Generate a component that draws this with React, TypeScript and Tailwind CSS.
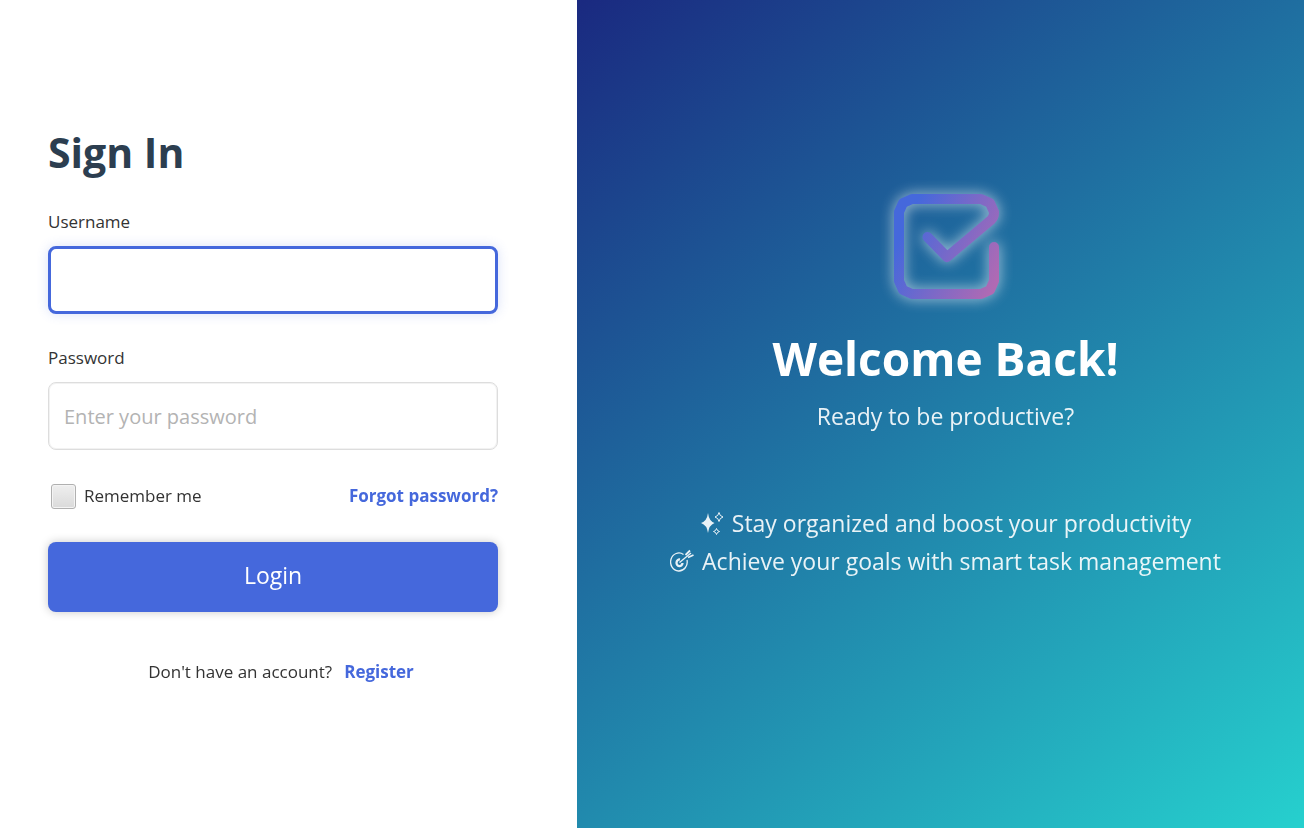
import type { InputHTMLAttributes, ReactNode } from "react";

function Field({ label, id, ...props }: { label: string; id: string } & InputHTMLAttributes<HTMLInputElement>) {
  return (
    <div className="flex flex-col gap-3">
      <label htmlFor={id} className="text-[17px] leading-6 text-[#333333]">{label}</label>
      <input
        id={id}
        {...props}
        className="h-[68px] w-full rounded-lg border border-[#dddddd] bg-white px-[15px] text-[20px] text-[#333333] caret-transparent shadow-[inset_0_0_0_1px_#f2f2f2] outline-none placeholder:text-[#b3b3b3] focus:border-[3px] focus:border-[#4568dc] focus:shadow-[0_0_12px_rgba(69,104,220,0.2)]"
      />
    </div>
  );
}

function Logo() {
  return (
    <svg viewBox="0 0 150 150" className="size-[150px] overflow-visible" fill="none" aria-hidden="true">
      <defs>
        <linearGradient id="logo" gradientUnits="userSpaceOnUse" x1="30" y1="65" x2="126" y2="110">
          <stop stopColor="#4568dc" />
          <stop offset="1" stopColor="#b06ab3" />
        </linearGradient>
      </defs>
      <path
        className="drop-shadow-[0_0_7px_rgba(255,255,255,0.65)]"
        d="M123 77V111L119 120L110 124H41L32 120L28 111V42L32 33L41 29H110L119 33L123 42V43Q123 47 120 50L76 87L56.500 67"
        stroke="url(#logo)"
        strokeWidth="10"
        strokeLinecap="round"
        strokeLinejoin="round"
      />
    </svg>
  );
}

function Sparkles() {
  return (
    <svg viewBox="0 0 24 24" className="size-6 shrink-0" aria-hidden="true">
      <path fill="currentColor" d="M8 2Q9 10 14.500 12Q9 14 8 22Q7 14 1 12Q7 10 8 2Z" />
      <path fill="none" stroke="currentColor" d="M19 1.500Q19.500 5 23 6Q19.500 7 19 10.500Q18.500 7 15 6Q18.500 5 19 1.500ZM16.500 17.500Q17 20 19.500 20.500Q17 21 16.500 23.500Q16 21 13.500 20.500Q16 20 16.500 17.500Z" />
    </svg>
  );
}

function Target() {
  return (
    <svg viewBox="0 0 24 24" className="size-6 shrink-0" fill="none" stroke="currentColor" aria-hidden="true">
      <path strokeWidth="1.300" d="M13.500 5.500A8.300 9 0 1 0 17 11" />
      <path strokeWidth="2.300" d="M10 10.500A3 3.300 0 1 0 12.500 14" />
      <path strokeWidth="1.300" d="M9.500 13.500L21 4" />
      <path strokeWidth="1.800" d="M15.500 6L20 1.500M18 8.500L23.500 6" />
    </svg>
  );
}

function Feature({ icon, children }: { icon: ReactNode; children: ReactNode }) {
  return <li className="flex items-center justify-center gap-2">{icon}<span>{children}</span></li>;
}

export default function App() {
  return (
    <main className="flex min-h-screen bg-white font-['Open_Sans','Noto_Sans',sans-serif]">
      <section className="flex w-[577px] shrink-0 flex-col justify-center bg-white pr-[79px] pb-5 pl-12">
        <form onSubmit={(event) => event.preventDefault()}>
          <h1 className="text-[41px] leading-[56px] font-bold text-[#2c3e50]">Sign In</h1>
          <div className="mt-[30px] flex flex-col gap-8">
            <Field label="Username" id="username" type="text" autoFocus />
            <Field label="Password" id="password" type="password" placeholder="Enter your password" />
          </div>
          <div className="mt-8 flex items-center justify-between text-[17px] leading-7">
            <label className="flex items-center gap-2 pl-[3px] text-[#333333]">
              <input type="checkbox" className="size-[25px] appearance-none rounded-[3px] border border-[#b0b0b0] bg-linear-to-b from-[#efefef] to-[#dadada] shadow-[inset_0_0_0_1px_#f4f4f4]" />
              Remember me
            </label>
            <a href="#forgot" className="font-bold text-[#4568dc]">Forgot password?</a>
          </div>
          <button type="submit" className="mt-8 h-[70px] w-full rounded-lg bg-[#4568dc] pb-1 text-[23px] text-white shadow-[0_0_10px_rgba(0,0,0,0.22)]">Login</button>
          <p className="mt-12 flex justify-center gap-3 pl-4 text-[17px] leading-6 text-[#333333]">
            Don't have an account?
            <a href="#register" className="font-bold text-[#4568dc]">Register</a>
          </p>
        </form>
      </section>
      <section className="flex flex-1 flex-col items-center justify-center bg-[linear-gradient(141deg,#1a2980,#26d0ce)] pb-[78px] pl-2.5 text-white">
        <Logo />
        <h2 className="mt-2 text-[46px] leading-[60px] font-bold">Welcome Back!</h2>
        <p className="mt-3 text-[23px] leading-8 text-white/90">Ready to be productive?</p>
        <ul className="mt-[72px] text-[23px] leading-[38px] text-white/90">
          <Feature icon={<Sparkles />}>Stay organized and boost your productivity</Feature>
          <Feature icon={<Target />}>Achieve your goals with smart task management</Feature>
        </ul>
      </section>
    </main>
  );
}
